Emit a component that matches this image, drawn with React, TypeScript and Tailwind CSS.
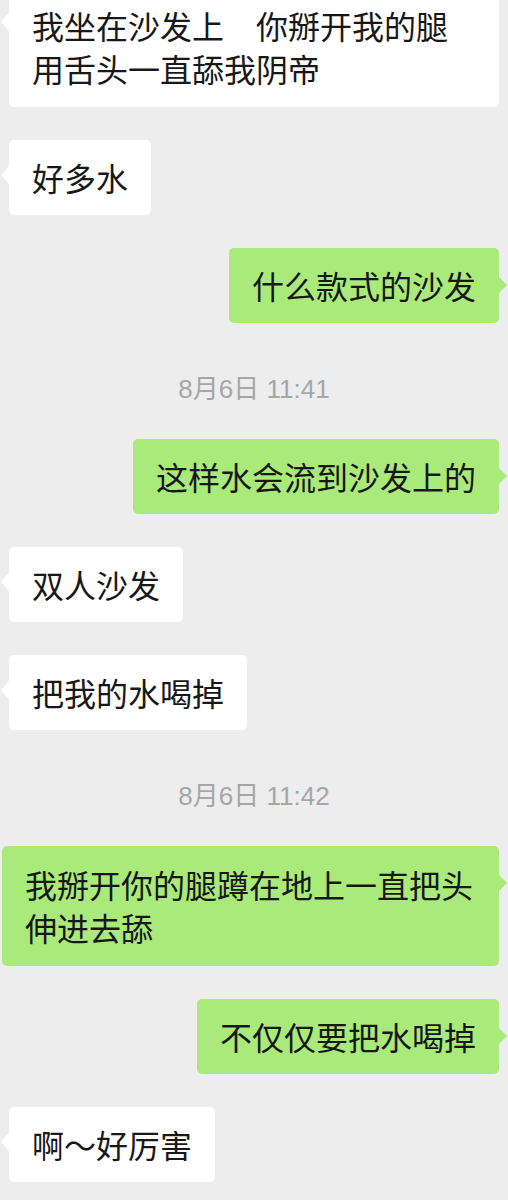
import React from 'react'

type Msg =
  | { kind: 'in' | 'out'; text: string; multi?: boolean }
  | { kind: 'time'; text: string }

const messages: Msg[] = [
  { kind: 'in', text: '我坐在沙发上　你掰开我的腿用舌头一直舔我阴帝', multi: true },
  { kind: 'in', text: '好多水' },
  { kind: 'out', text: '什么款式的沙发' },
  { kind: 'time', text: '8月6日 11:41' },
  { kind: 'out', text: '这样水会流到沙发上的' },
  { kind: 'in', text: '双人沙发' },
  { kind: 'in', text: '把我的水喝掉' },
  { kind: 'time', text: '8月6日 11:42' },
  { kind: 'out', text: '我掰开你的腿蹲在地上一直把头伸进去舔', multi: true },
  { kind: 'out', text: '不仅仅要把水喝掉' },
  { kind: 'in', text: '啊～好厉害' },
]

function Bubble({ text, out, multi }: { text: string; out: boolean; multi?: boolean }) {
  return (
    <div className={out ? 'flex justify-end pr-[9px]' : 'flex justify-start pl-[9px] pr-[9px]'}>
      <div
        className={
          'relative max-w-[497px] rounded-[5px] px-[23px] text-[32px] leading-[43px] text-[#181818] ' +
          (multi ? 'py-[17px] ' : 'py-[16px] ') +
          (out ? 'bg-[#a9ea7a]' : 'bg-white')
        }
      >
        {out ? (
          <span className="absolute -right-[8px] top-[29px] h-0 w-0 border-y-[8px] border-l-[8px] border-y-transparent border-l-[#a9ea7a]" />
        ) : (
          <span className="absolute -left-[8px] top-[26px] h-0 w-0 border-y-[9px] border-r-[8px] border-y-transparent border-r-white" />
        )}
        {text}
      </div>
    </div>
  )
}

export default function App() {
  return (
    <div
      className="min-h-[1200px] w-full overflow-hidden bg-[#ededed]"
      style={{ fontFamily: '"Noto Sans CJK SC", "Noto Sans", sans-serif' }}
    >
      <div className="-mt-[13px] flex flex-col gap-[33px]">
        {messages.map((m, i) =>
          m.kind === 'time' ? (
            <div
              key={i}
              className="h-[50px] pt-[20px] text-center text-[26px] leading-[26px] text-[#a6a6a6]"
              style={{ fontFamily: '"Liberation Sans", "Noto Sans CJK SC", sans-serif' }}
            >
              {m.text}
            </div>
          ) : (
            <Bubble key={i} text={m.text} out={m.kind === 'out'} multi={m.multi} />
          )
        )}
      </div>
    </div>
  )
}
